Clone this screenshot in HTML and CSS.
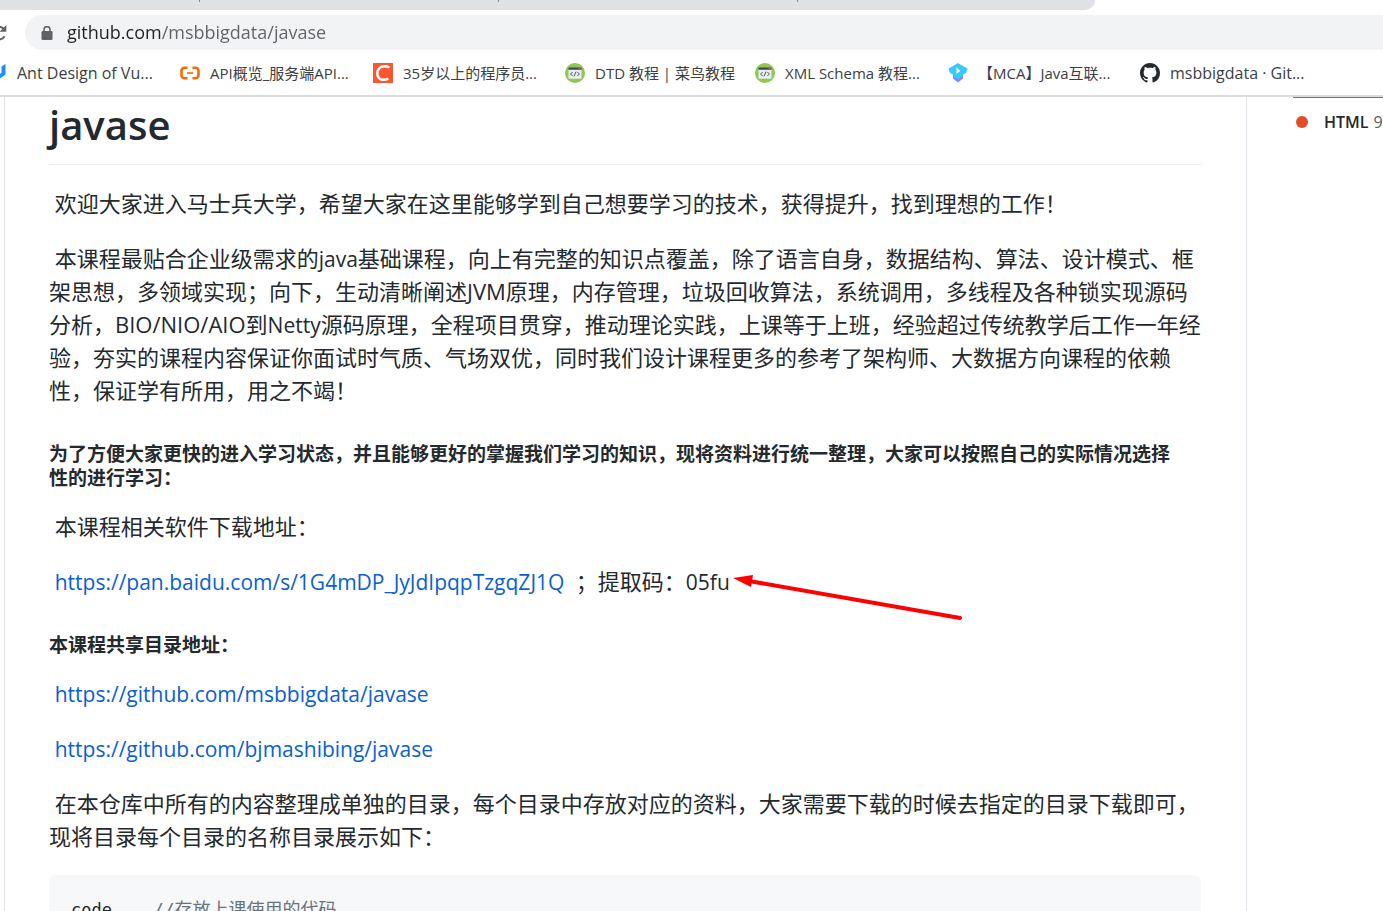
FILE: index.html
```html
<!DOCTYPE html>
<html lang="zh-CN">
<head>
<meta charset="utf-8">
<meta name="viewport" content="width=device-width, initial-scale=1">
<title>msbbigdata/javase</title>
<link rel="stylesheet" href="styles.css">
</head>
<body>
<svg class="sprite" aria-hidden="true">
  <symbol id="runoob" viewBox="0 0 20 20">
    <circle cx="10" cy="10" r="10" fill="#8fc751"/>
    <path d="M3.500 6h13v9a.8.8 0 0 1-.8.8H4.300a.8.8 0 0 1-.8-.8z" fill="#e9eef0"/>
    <path d="M3.500 6.800V5.300a.8.8 0 0 1 .8-.8h11.400a.8.8 0 0 1 .8.8v1.500z" fill="#34495e"/>
    <path d="M13.500 5.600h2" stroke="#e8594a"/>
    <path d="M7.600 9l-2 2 2 2M12.400 9l2 2-2 2M11 8.600l-2 4.800" fill="none" stroke="#4a5a68" stroke-width="1"/>
  </symbol>
</svg>

<header class="browser">
  <div class="tabs"><span class="tab"></span><span class="tab"></span><span class="tab"></span></div>
  <div class="toolbar">
    <button class="reload" type="button" aria-label="重新加载">
      <svg viewBox="0 0 16 16" width="16" height="16"><path d="M13.600 11.200A6.300 6.300 0 1 1 12.600 3.700" fill="none" stroke="#5f6368" stroke-width="2"/><path d="M15.300 0v6.700H8.600z" fill="#5f6368"/></svg>
    </button>
    <label class="address">
      <svg class="lock" viewBox="0 0 12 14" width="12" height="14" role="img" aria-label="安全"><path d="M3 6V3.700a3 3 0 0 1 6 0V6" fill="none" stroke="#5f6368" stroke-width="1.500"/><rect x=".5" y="5" width="11" height="9" rx="1.200" fill="#5f6368"/></svg>
      <input class="url" type="text" aria-label="地址" value="github.com/msbbigdata/javase" spellcheck="false">
    </label>
  </div>
  <nav class="bookmarks" aria-label="书签">
    <a class="bookmark latin-title b-ant" href="#"><svg width="20" height="20" viewBox="0 0 20 20"><path d="M15.500 3.500L19.500 1v10.500L12 17v-5.500l3.500-1.500z" fill="#1890ff"/></svg><span>Ant Design of Vu...</span></a>
    <a class="bookmark b-api" href="#"><svg width="20" height="20" viewBox="0 0 20 20"><path d="M7.500 4.800H4.500a3 3 0 0 0-3 3v4.400a3 3 0 0 0 3 3h3M12.500 4.800h3a3 3 0 0 1 3 3v4.400a3 3 0 0 1-3 3h-3" fill="none" stroke="#ff6a00" stroke-width="2.600"/><path d="M7 10h6" stroke="#ff6a00" stroke-width="1.600"/></svg><span>API概览_服务端API...</span></a>
    <a class="bookmark b-csdn" href="#"><svg width="20" height="20" viewBox="0 0 20 20"><path d="M0 0h20v20H0z" fill="#fc5531"/><path d="M16.500 4.500C11 1.500 4.500 4 4.300 10.300c0 6.200 5.700 8 11 5.300" fill="none" stroke="#fff" stroke-width="2.500"/></svg><span>35岁以上的程序员...</span></a>
    <a class="bookmark b-dtd" href="#"><svg width="20" height="20"><use href="#runoob"/></svg><span>DTD 教程 | 菜鸟教程</span></a>
    <a class="bookmark b-xml" href="#"><svg width="20" height="20"><use href="#runoob"/></svg><span>XML Schema 教程...</span></a>
    <a class="bookmark b-mca" href="#"><svg width="20" height="20" viewBox="0 0 20 20"><path d="M5 12l5 3 5-3v3.500l-5 4-5-4z" fill="#8088ff"/><path d="M10 0l4 2.500 5.500 3L18 10l-3 1.500v1.500l-5 3-5-3v-1.500L2 10 .5 5.500l5.500-3z" fill="#37c8ff"/><path d="M8.500 4.500l4 3.300-4 3.300z" fill="#fff"/></svg><span>【MCA】Java互联...</span></a>
    <a class="bookmark latin-title b-git" href="#"><svg width="20" height="20" viewBox="0 0 16 16"><path fill="#24292e" d="M8 0C3.580 0 0 3.580 0 8c0 3.540 2.290 6.530 5.470 7.590.4.070.55-.17.55-.38 0-.19-.01-.82-.01-1.490-2.010.37-2.530-.49-2.690-.94-.09-.23-.48-.94-.82-1.130-.28-.15-.68-.52-.01-.53.63-.01 1.080.58 1.230.82.72 1.210 1.870.87 2.330.66.07-.52.28-.87.51-1.070-1.780-.2-3.640-.89-3.640-3.950 0-.87.31-1.590.82-2.150-.08-.2-.36-1.020.08-2.120 0 0 .67-.21 2.200.82.64-.18 1.320-.27 2-.27s1.360.09 2 .27c1.530-1.040 2.200-.82 2.200-.82.44 1.100.16 1.920.08 2.120.51.56.82 1.270.82 2.150 0 3.070-1.870 3.750-3.650 3.950.29.25.54.73.54 1.480 0 1.070-.01 1.930-.01 2.200 0 .21.15.46.55.38A8.010 8.010 0 0 0 16 8c0-4.420-3.580-8-8-8z"/></svg><span>msbbigdata · Git...</span></a>
  </nav>
</header>

<div class="page">
  <main class="readme">
    <h1>javase</h1>
    <p>&nbsp;欢迎大家进入马士兵大学，希望大家在这里能够学到自己想要学习的技术，获得提升，找到理想的工作！</p>
    <p>&nbsp;本课程最贴合企业级需求的<span class="latin">java</span>基础课程，向上有完整的知识点覆盖，除了语言自身，数据结构、算法、设计模式、框架思想，多领域实现；向下，生动清晰阐述JVM原理，内存管理，垃圾回收算法，系统调用，多线程及各种锁实现源码分析，BIO/NIO/AIO到<span class="latin">Netty</span>源码原理，全程项目贯穿，推动理论实践，上课等于上班，经验超过传统教学后工作一年经验，夯实的课程内容保证你面试时气质、气场双优，同时我们设计课程更多的参考了架构师、大数据方向课程的依赖性，保证学有所用，用之不竭！</p>
    <h5>为了方便大家更快的进入学习状态，并且能够更好的掌握我们学习的知识，现将资料进行统一整理，大家可以按照自己的实际情况选择<br>性的进行学习：</h5>
    <p>&nbsp;本课程相关软件下载地址：</p>
    <p>&nbsp;<a href="https://pan.baidu.com/s/1G4mDP_JyJdIpqpTzgqZJ1Q">https://pan.baidu.com/s/1G4mDP_JyJdIpqpTzgqZJ1Q</a> &nbsp;；提取码：<span class="latin extract-code">05fu<svg class="arrow" width="232" height="48" viewBox="0 0 232 48" aria-hidden="true"><path d="M20 6.500L228 43" stroke="#f00" stroke-width="4" stroke-linecap="round"/><path d="M1 3l20-3-2 12z" fill="#f00"/></svg></span></p>
    <h5>本课程共享目录地址：</h5>
    <p>&nbsp;<a href="https://github.com/msbbigdata/javase">https://github.com/msbbigdata/javase</a></p>
    <p>&nbsp;<a href="https://github.com/bjmashibing/javase">https://github.com/bjmashibing/javase</a></p>
    <p>&nbsp;在本仓库中所有的内容整理成单独的目录，每个目录中存放对应的资料，大家需要下载的时候去指定的目录下载即可，现将目录每个目录的名称目录展示如下：</p>
    <pre>code    <span class="comment">//存放上课使用的代码</span></pre>
  </main>
  <aside class="sidebar">
    <div class="language-bar"></div>
    <div class="language"><span class="dot"></span><b>HTML</b><span class="percent">9</span></div>
  </aside>
</div>
</body>
</html>
```
FILE: styles.css
```css
* { box-sizing: border-box; }

body {
  margin: 0;
  height: 100vh;
  overflow: hidden;
  display: flex;
  flex-direction: column;
  background: #fff;
  color: #24292e;
  font-family: "Open Sans", "Noto Sans CJK SC", sans-serif;
  text-spacing-trim: space-all;
}

.sprite { display: none; }

.browser {
  flex: none;
  border-bottom: 2px solid #dadce0;
}

.tabs {
  display: flex;
  height: 10px;
  margin-right: 288px;
  background: #dee1e6;
  border-bottom-right-radius: 10px;
}

.tab {
  width: 299px;
  height: 2px;
  border-right: 1px solid #80868b;
}

.tab:first-child { width: 200px; }

.toolbar {
  display: flex;
  align-items: center;
  padding-top: 5px;
}

.reload {
  width: 25px;
  height: 35px;
  padding: 0;
  border: 0;
  background: none;
  display: flex;
  align-items: center;
  margin-left: -9px;
  margin-right: 9px;
}

.address {
  flex: 1;
  display: flex;
  align-items: center;
  gap: 14px;
  height: 35px;
  padding-left: 16px;
  background: #f1f3f4;
  border-radius: 18px 0 0 18px;
}

.url {
  flex: 1;
  padding: 0 0 2px;
  border: 0;
  outline: 0;
  font: 18px/30px "Open Sans", sans-serif;
  color: transparent;
  caret-color: #202124;
  background: linear-gradient(to right, #202124 94px, #5f6368 94px);
  background-clip: text;
  -webkit-background-clip: text;
}

.bookmarks {
  display: flex;
  height: 45px;
  align-items: center;
  overflow: hidden;
  white-space: nowrap;
}

.bookmark {
  display: flex;
  flex: none;
  align-items: center;
  gap: 10px;
  color: #3c4043;
  font-size: 15px;
  line-height: 24px;
  text-decoration: none;
}

.latin-title { font-size: 16px; }

.b-ant { width: 194px; margin-left: -14px; gap: 11px; }
.b-api { width: 193px; }
.b-csdn { width: 192px; }
.b-dtd { width: 190px; }
.b-xml { width: 193px; }
.b-mca { width: 192px; }

.page {
  flex: 1;
  min-height: 0;
  display: flex;
  padding-left: 4px;
}

.readme {
  flex: 1;
  min-width: 0;
  padding: 0 45px 0 44px;
  border: 1px solid #e1e4e8;
  border-width: 0 1px;
  font-size: 22px;
  line-height: 33px;
}

.readme h1 {
  margin: 0 0 22px;
  padding-bottom: 12px;
  border-bottom: 1px solid #eaecef;
  font-size: 40px;
  font-weight: 600;
  line-height: 55px;
}

.readme p { margin: 0 0 22px; }

.readme h5 {
  margin: 35px 0 20px;
  font-size: 19px;
  font-weight: 700;
  line-height: 24px;
}

.readme a {
  color: #0b60d0;
  font-size: 21px;
  line-height: 1;
  text-decoration: none;
}

.latin {
  font-size: 21px;
  line-height: 1;
}

.extract-code { position: relative; }

.arrow {
  position: absolute;
  left: calc(100% + 2px);
  top: 7px;
}

.readme pre {
  margin: 0;
  padding: 22px;
  border-radius: 7px;
  background: #f6f8fa;
  font: 17px/27px "DejaVu Sans Mono", "Noto Sans CJK SC", monospace;
}

.comment {
  color: #6a737d;
  font-size: 18px;
  line-height: 1;
}

.sidebar {
  flex: none;
  width: 136px;
  padding-left: 46px;
  overflow: hidden;
}

.language-bar {
  height: 1px;
  background: #e34c26;
}

.language {
  display: flex;
  align-items: center;
  margin-top: 12px;
  padding-left: 3px;
  font-size: 16px;
  line-height: 24px;
  white-space: nowrap;
}

.dot {
  flex: none;
  width: 12px;
  height: 12px;
  margin-right: 16px;
  border-radius: 50%;
  background: #e34c26;
}

.language b { font-weight: 600; margin-right: 5px; }
.percent { color: #586069; }
```
